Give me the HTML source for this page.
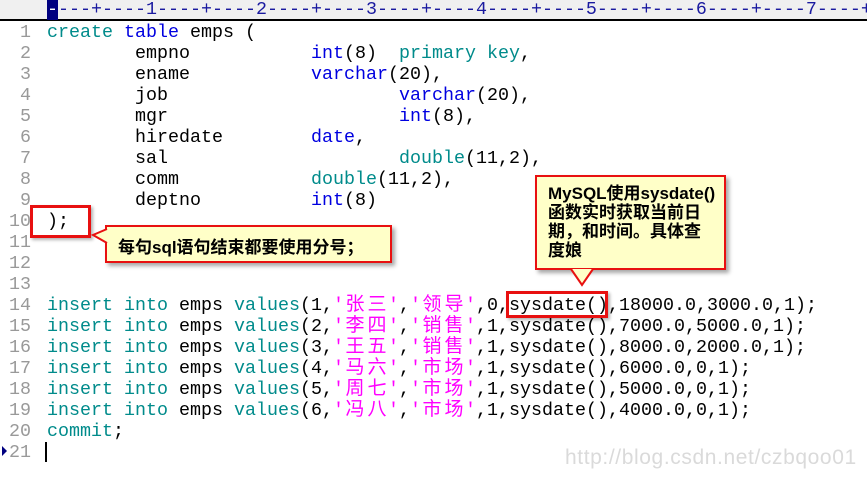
<!DOCTYPE html>
<html><head><meta charset="utf-8"><style>
body{margin:0;width:867px;height:478px;background:#fff;position:relative;overflow:hidden;font-family:"Liberation Mono","Noto Sans CJK SC",monospace;}
.ruler{position:absolute;left:0;top:0;width:867px;height:21px;background:#f0f0f0;border-bottom:2px solid #000;box-sizing:border-box;}
.ruler pre{position:absolute;left:47px;top:0;margin:0;font-size:18.33px;line-height:20px;color:#1a1aa0;white-space:pre;}
.ruler .cur{background:#000080;color:#fff;}
.code{position:absolute;left:0;top:22px;margin:0;}
.ln{position:absolute;left:0;width:31px;text-align:right;color:#999;font-size:18.33px;line-height:21px;}
.tx{position:absolute;left:47px;font-size:18.33px;line-height:21px;white-space:pre;color:#000;}
.k{color:#008b8b}.b{color:#0000e0}.s{color:#ff00ff}
.c{display:inline-block;width:22px;text-align:center;font-size:19px;}
.callout{position:absolute;background:#ffffc8;border:2px solid #e81010;box-shadow:3px 3px 4px rgba(0,0,0,.35);font-family:"Liberation Sans","Noto Sans CJK SC",sans-serif;font-weight:bold;font-size:17px;color:#000;box-sizing:border-box;white-space:nowrap;}
.rb{position:absolute;border:3px solid #e81010;box-sizing:border-box;box-shadow:2px 2px 3px rgba(0,0,0,.3);}
</style></head><body>
<div class="ruler"><pre><span class="cur">-</span>---+----1----+----2----+----3----+----4----+----5----+----6----+----7----+</pre></div>
<div class="code">
<div class="ln" style="top:0">1</div><div class="tx" style="top:0"><span class="k">create</span> <span class="b">table</span> emps (</div>
<div class="ln" style="top:21px">2</div><div class="tx" style="top:21px">        empno           <span class="b">int</span>(8)  <span class="k">primary key</span>,</div>
<div class="ln" style="top:42px">3</div><div class="tx" style="top:42px">        ename           <span class="b">varchar</span>(20),</div>
<div class="ln" style="top:63px">4</div><div class="tx" style="top:63px">        job                     <span class="b">varchar</span>(20),</div>
<div class="ln" style="top:84px">5</div><div class="tx" style="top:84px">        mgr                     <span class="b">int</span>(8),</div>
<div class="ln" style="top:105px">6</div><div class="tx" style="top:105px">        hiredate        <span class="b">date</span>,</div>
<div class="ln" style="top:126px">7</div><div class="tx" style="top:126px">        sal                     <span class="k">double</span>(11,2),</div>
<div class="ln" style="top:147px">8</div><div class="tx" style="top:147px">        comm            <span class="k">double</span>(11,2),</div>
<div class="ln" style="top:168px">9</div><div class="tx" style="top:168px">        deptno          <span class="b">int</span>(8)</div>
<div class="ln" style="top:189px">10</div><div class="tx" style="top:189px">);</div>
<div class="ln" style="top:210px">11</div>
<div class="ln" style="top:231px">12</div>
<div class="ln" style="top:252px">13</div>
<div class="ln" style="top:273px">14</div><div class="tx" style="top:273px"><span class="k">insert</span> <span class="k">into</span> emps <span class="k">values</span>(1,<span class="s">'<span class="c">张</span><span class="c">三</span>'</span>,<span class="s">'<span class="c">领</span><span class="c">导</span>'</span>,0,sysdate(),18000.0,3000.0,1);</div>
<div class="ln" style="top:294px">15</div><div class="tx" style="top:294px"><span class="k">insert</span> <span class="k">into</span> emps <span class="k">values</span>(2,<span class="s">'<span class="c">李</span><span class="c">四</span>'</span>,<span class="s">'<span class="c">销</span><span class="c">售</span>'</span>,1,sysdate(),7000.0,5000.0,1);</div>
<div class="ln" style="top:315px">16</div><div class="tx" style="top:315px"><span class="k">insert</span> <span class="k">into</span> emps <span class="k">values</span>(3,<span class="s">'<span class="c">王</span><span class="c">五</span>'</span>,<span class="s">'<span class="c">销</span><span class="c">售</span>'</span>,1,sysdate(),8000.0,2000.0,1);</div>
<div class="ln" style="top:336px">17</div><div class="tx" style="top:336px"><span class="k">insert</span> <span class="k">into</span> emps <span class="k">values</span>(4,<span class="s">'<span class="c">马</span><span class="c">六</span>'</span>,<span class="s">'<span class="c">市</span><span class="c">场</span>'</span>,1,sysdate(),6000.0,0,1);</div>
<div class="ln" style="top:357px">18</div><div class="tx" style="top:357px"><span class="k">insert</span> <span class="k">into</span> emps <span class="k">values</span>(5,<span class="s">'<span class="c">周</span><span class="c">七</span>'</span>,<span class="s">'<span class="c">市</span><span class="c">场</span>'</span>,1,sysdate(),5000.0,0,1);</div>
<div class="ln" style="top:378px">19</div><div class="tx" style="top:378px"><span class="k">insert</span> <span class="k">into</span> emps <span class="k">values</span>(6,<span class="s">'<span class="c">冯</span><span class="c">八</span>'</span>,<span class="s">'<span class="c">市</span><span class="c">场</span>'</span>,1,sysdate(),4000.0,0,1);</div>
<div class="ln" style="top:399px">20</div><div class="tx" style="top:399px"><span class="k">commit</span>;</div>
<div class="ln" style="top:420px">21</div>
</div>
<svg style="position:absolute;left:2px;top:446px" width="6" height="12"><path d="M0 0L5 5L0 10Z" fill="#000080"/></svg>
<div style="position:absolute;left:45px;top:442px;width:2px;height:20px;background:#000"></div>
<div style="position:absolute;left:565px;top:446px;font-family:'Liberation Sans',sans-serif;font-size:21px;color:#dadada;letter-spacing:0.6px;">http://blog.csdn.net/czbqoo01</div>

<div class="rb" style="left:30px;top:205px;width:61px;height:33px"></div>
<div class="rb" style="left:506px;top:291px;width:102px;height:27px"></div>

<div class="callout" style="left:105px;top:225px;width:287px;height:38px;padding:6px 0 0 11px;">每句sql语句结束都要使用分号；</div>
<svg style="position:absolute;left:90px;top:224px" width="18" height="24"><path d="M17 5L3 11L17 19" fill="#ffffc8" stroke="#e81010" stroke-width="2"/></svg>

<div class="callout" style="left:535px;top:175px;width:191px;height:95px;padding:7px 0 0 11px;line-height:19px;">MySQL使用sysdate()<br>函数实时获取当前日<br>期，和时间。具体查<br>度娘</div>
<svg style="position:absolute;left:569px;top:266px" width="30" height="22"><path d="M2 3L13 19L24 3" fill="#ffffc8" stroke="#e81010" stroke-width="2"/></svg>
</body></html>
